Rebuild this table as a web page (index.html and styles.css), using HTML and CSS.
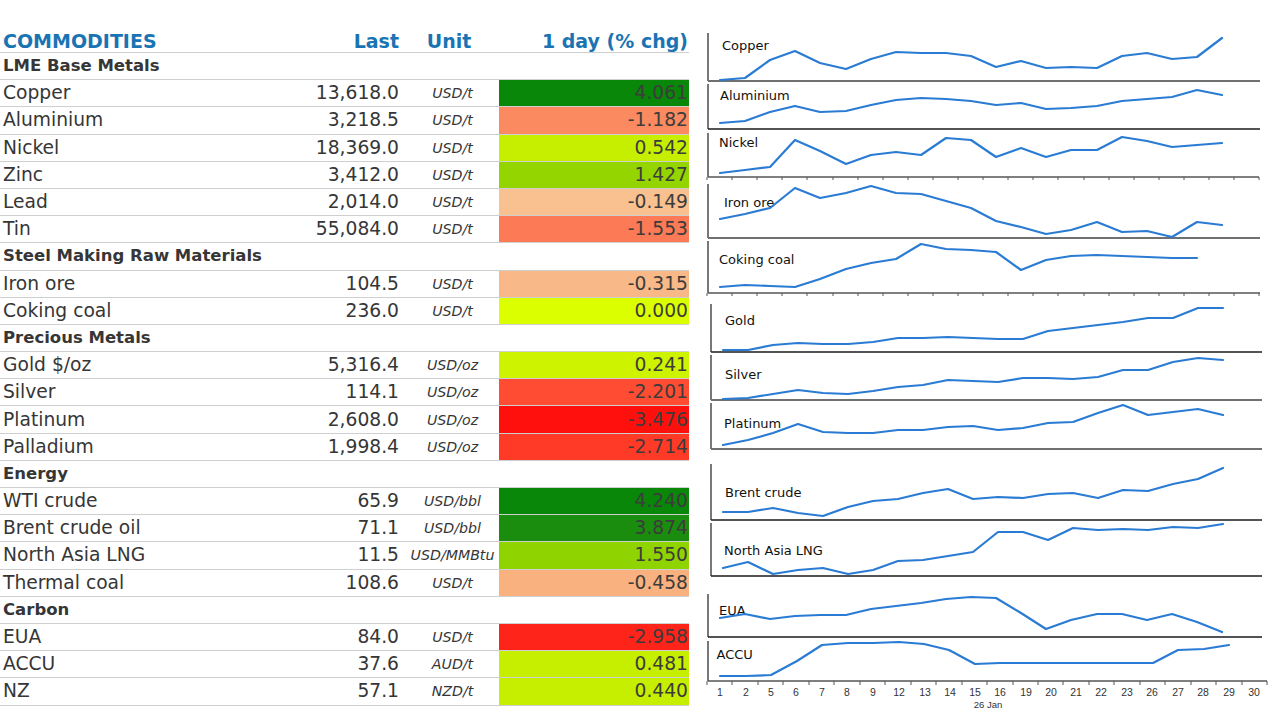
FILE: index.html
```html
<!DOCTYPE html>
<html lang="en">
<head>
<meta charset="utf-8">
<title>Commodities</title>
<link rel="stylesheet" href="styles.css">
</head>
<body>
<div class="page">
  <table class="board">
    <colgroup>
      <col class="c-name"><col class="c-last"><col class="c-unit"><col class="c-chg">
    </colgroup>
    <thead>
      <tr class="head">
        <th class="name">COMMODITIES</th>
        <th class="last">Last</th>
        <th class="unit-h">Unit</th>
        <th class="chg">1 day (% chg)</th>
      </tr>
    </thead>
    <tbody>
      <tr class="sec"><td colspan="4">LME Base Metals</td></tr>
      <tr><td class="name">Copper</td><td class="last">13,618.0</td><td class="unit">USD/t</td><td class="chg g1">4.061</td></tr>
      <tr><td class="name">Aluminium</td><td class="last">3,218.5</td><td class="unit">USD/t</td><td class="chg r2">-1.182</td></tr>
      <tr><td class="name">Nickel</td><td class="last">18,369.0</td><td class="unit">USD/t</td><td class="chg l1">0.542</td></tr>
      <tr><td class="name">Zinc</td><td class="last">3,412.0</td><td class="unit">USD/t</td><td class="chg l3">1.427</td></tr>
      <tr><td class="name">Lead</td><td class="last">2,014.0</td><td class="unit">USD/t</td><td class="chg p1">-0.149</td></tr>
      <tr><td class="name">Tin</td><td class="last">55,084.0</td><td class="unit">USD/t</td><td class="chg r3">-1.553</td></tr>
      <tr class="sec"><td colspan="4">Steel Making Raw Materials</td></tr>
      <tr><td class="name">Iron ore</td><td class="last">104.5</td><td class="unit">USD/t</td><td class="chg p2">-0.315</td></tr>
      <tr><td class="name">Coking coal</td><td class="last">236.0</td><td class="unit">USD/t</td><td class="chg y0">0.000</td></tr>
      <tr class="sec"><td colspan="4">Precious Metals</td></tr>
      <tr><td class="name">Gold $/oz</td><td class="last">5,316.4</td><td class="unit">USD/oz</td><td class="chg l2">0.241</td></tr>
      <tr><td class="name">Silver</td><td class="last">114.1</td><td class="unit">USD/oz</td><td class="chg r4">-2.201</td></tr>
      <tr><td class="name">Platinum</td><td class="last">2,608.0</td><td class="unit">USD/oz</td><td class="chg r6">-3.476</td></tr>
      <tr><td class="name">Palladium</td><td class="last">1,998.4</td><td class="unit">USD/oz</td><td class="chg r5">-2.714</td></tr>
      <tr class="sec"><td colspan="4">Energy</td></tr>
      <tr><td class="name">WTI crude</td><td class="last">65.9</td><td class="unit">USD/bbl</td><td class="chg g1">4.240</td></tr>
      <tr><td class="name">Brent crude oil</td><td class="last">71.1</td><td class="unit">USD/bbl</td><td class="chg g2">3.874</td></tr>
      <tr><td class="name">North Asia LNG</td><td class="last">11.5</td><td class="unit">USD/MMBtu</td><td class="chg l4">1.550</td></tr>
      <tr><td class="name">Thermal coal</td><td class="last">108.6</td><td class="unit">USD/t</td><td class="chg p3">-0.458</td></tr>
      <tr class="sec"><td colspan="4">Carbon</td></tr>
      <tr><td class="name">EUA</td><td class="last">84.0</td><td class="unit">USD/t</td><td class="chg r5b">-2.958</td></tr>
      <tr><td class="name">ACCU</td><td class="last">37.6</td><td class="unit">AUD/t</td><td class="chg l1">0.481</td></tr>
      <tr><td class="name">NZ</td><td class="last">57.1</td><td class="unit">NZD/t</td><td class="chg l1">0.440</td></tr>
    </tbody>
  </table>

  <svg class="charts" width="580" height="720" viewBox="700 0 580 720" xmlns="http://www.w3.org/2000/svg">
    <!-- Copper -->
    <line class="ax" x1="708" y1="33" x2="708" y2="81"/>
    <line class="base gray" x1="708" y1="81" x2="1260" y2="81"/>
    <text class="lbl" x="722" y="50">Copper</text>
    <polyline class="ln" points="720,80 745,78 770,60 795,51 820,63 846,69 871,59 896,52 921,53 946,53 971,56 996,67 1021,61 1046,68 1071,67 1097,68 1122,56 1147,53 1172,59 1197,57 1222,38"/>

    <!-- Aluminium -->
    <line class="ax" x1="708" y1="84" x2="708" y2="129"/>
    <line class="base dark" x1="708" y1="129" x2="1260" y2="129"/>
    <text class="lbl" x="720" y="100">Aluminium</text>
    <polyline class="ln" points="720,123 745,121 770,112 795,106 820,112 846,111 871,105 896,100 921,98 946,99 971,101 996,105 1021,103 1046,109 1071,108 1097,106 1122,101 1147,99 1172,97 1197,90 1222,95"/>

    <!-- Nickel -->
    <line class="ax" x1="708" y1="133" x2="708" y2="177"/>
    <line class="base mid" x1="708" y1="177" x2="1259" y2="177"/>
    <path class="tick" d="M707 177v3M732 177v3M757 177v3M782 177v3M807 177v3M833 177v3M858 177v3M883 177v3M908 177v3M933 177v3M958 177v3M983 177v3M1008 177v3M1033 177v3M1058 177v3M1084 177v3M1109 177v3M1134 177v3M1159 177v3M1184 177v3M1209 177v3M1234 177v3M1259 177v3"/>
    <text class="lbl" x="719" y="146.5">Nickel</text>
    <polyline class="ln" points="720,173 745,170 770,167 795,140 820,151 846,164 871,155 896,152 921,155 946,138 971,140 996,157 1021,148 1046,157 1071,150 1097,150 1122,137 1147,141 1172,147 1197,145 1222,143"/>

    <!-- Iron ore -->
    <line class="ax" x1="708" y1="184" x2="708" y2="238"/>
    <line class="base gray" x1="708" y1="238" x2="1260" y2="238"/>
    <text class="lbl" x="724" y="206.5">Iron ore</text>
    <polyline class="ln" points="720,219 745,214 770,208 795,188 820,198 846,193 871,186 896,193 921,194 946,201 971,208 996,221 1021,227 1046,234 1071,230 1097,222 1122,232 1147,231 1172,237 1197,222 1222,225"/>

    <!-- Coking coal -->
    <line class="ax" x1="708" y1="241" x2="708" y2="293"/>
    <line class="base mid" x1="708" y1="293" x2="1260" y2="293"/>
    <path class="tick" d="M707 293v3M732 293v3M757 293v3M782 293v3M807 293v3M833 293v3M858 293v3M883 293v3M908 293v3M933 293v3M958 293v3M983 293v3M1008 293v3M1033 293v3M1058 293v3M1084 293v3M1109 293v3M1134 293v3M1159 293v3M1184 293v3M1209 293v3M1234 293v3M1259 293v3"/>
    <text class="lbl" x="719" y="264">Coking coal</text>
    <polyline class="ln" points="720,287 745,285 770,286 795,287 820,279 846,269 871,263 896,259 921,244 946,249 971,250 996,252 1021,270 1046,260 1071,256 1097,255 1122,256 1147,257 1172,258 1197,258"/>

    <!-- Gold -->
    <line class="ax" x1="711" y1="304" x2="711" y2="352"/>
    <line class="base dark" x1="711" y1="352" x2="1262" y2="352"/>
    <text class="lbl" x="725" y="324.5">Gold</text>
    <polyline class="ln" points="723,350 748,350 773,345 798,343 823,344 848,344 873,342 898,338 923,338 948,337 973,338 998,339 1023,339 1048,331 1073,328 1098,325 1123,322 1148,318 1173,318 1198,308 1223,308"/>

    <!-- Silver -->
    <line class="ax" x1="711" y1="355" x2="711" y2="400"/>
    <line class="base gray" x1="711" y1="400" x2="1262" y2="400"/>
    <text class="lbl" x="725" y="379">Silver</text>
    <polyline class="ln" points="723,399 748,398 773,394 798,390 823,393 848,394 873,391 898,387 923,385 948,380 973,381 998,382 1023,378 1048,378 1073,379 1098,377 1123,370 1148,370 1173,362 1198,358 1223,360"/>

    <!-- Platinum -->
    <line class="ax" x1="711" y1="403" x2="711" y2="449"/>
    <line class="base gray" x1="711" y1="449" x2="1262" y2="449"/>
    <text class="lbl" x="724" y="427.5">Platinum</text>
    <polyline class="ln" points="723,445 748,440 773,433 798,424 823,432 848,433 873,433 898,430 923,430 948,427 973,426 998,430 1023,428 1048,423 1073,422 1098,413 1123,405 1148,415 1173,412 1198,409 1223,415"/>

    <!-- Brent crude -->
    <line class="ax" x1="711" y1="464" x2="711" y2="520"/>
    <line class="base dark" x1="711" y1="520" x2="1262" y2="520"/>
    <text class="lbl" x="725" y="497">Brent crude</text>
    <polyline class="ln" points="723,512 748,512 773,508 798,513 823,516 848,507 873,501 898,499 923,493 948,489 973,499 998,497 1023,498 1048,494 1073,493 1098,498 1123,490 1148,491 1173,484 1198,479 1223,468"/>

    <!-- North Asia LNG -->
    <line class="ax" x1="711" y1="523" x2="711" y2="576"/>
    <line class="base dark" x1="711" y1="576" x2="1262" y2="576"/>
    <text class="lbl" x="724" y="555">North Asia LNG</text>
    <polyline class="ln" points="723,568 748,562 773,574 798,570 823,568 848,574 873,570 898,561 923,560 948,556 973,552 998,532 1023,532 1048,540 1073,528 1098,530 1123,529 1148,530 1173,527 1198,528 1223,524"/>

    <!-- EUA -->
    <line class="ax" x1="708" y1="594" x2="708" y2="637"/>
    <line class="base dark" x1="708" y1="637" x2="1262" y2="637"/>
    <text class="lbl" x="719" y="615">EUA</text>
    <polyline class="ln" points="720,618 745,614 770,619 795,616 820,615 846,615 871,609 896,606 921,603 946,599 971,597 996,598 1021,613 1046,629 1071,620 1097,614 1122,614 1147,620 1172,614 1197,622 1222,632"/>

    <!-- ACCU -->
    <line class="ax" x1="708" y1="641" x2="708" y2="681"/>
    <line class="base mid" x1="708" y1="681" x2="1267" y2="681"/>
    <path class="tick" d="M707 681v4M732 681v4M758 681v4M783 681v4M809 681v4M834 681v4M860 681v4M885 681v4M911 681v4M936 681v4M962 681v4M987 681v4M1013 681v4M1038 681v4M1063 681v4M1089 681v4M1114 681v4M1140 681v4M1165 681v4M1191 681v4M1216 681v4M1242 681v4M1267 681v4"/>
    <text class="lbl" x="716.5" y="659">ACCU</text>
    <polyline class="ln" points="720,676 746,676 771,675 797,661 822,645 848,643 873,643 899,642 924,644 949,650 975,664 1000,663 1026,663 1051,663 1077,663 1102,663 1128,663 1153,663 1178,650 1204,649 1229,645"/>

    <!-- X axis labels -->
    <g class="xl">
      <text x="720" y="696">1</text>
      <text x="746" y="696">2</text>
      <text x="771" y="696">5</text>
      <text x="796" y="696">6</text>
      <text x="822" y="696">7</text>
      <text x="847" y="696">8</text>
      <text x="873" y="696">9</text>
      <text x="899" y="696">12</text>
      <text x="925" y="696">13</text>
      <text x="950" y="696">14</text>
      <text x="975" y="696">15</text>
      <text x="1000" y="696">16</text>
      <text x="1026" y="696">19</text>
      <text x="1051" y="696">20</text>
      <text x="1076" y="696">21</text>
      <text x="1101" y="696">22</text>
      <text x="1127" y="696">23</text>
      <text x="1152" y="696">26</text>
      <text x="1178" y="696">27</text>
      <text x="1203" y="696">28</text>
      <text x="1229" y="696">29</text>
      <text x="1254" y="696">30</text>
      <text class="mo" x="988" y="708">26 Jan</text>
    </g>
  </svg>
</div>
</body>
</html>
```

FILE: styles.css
```css
html, body {
  margin: 0;
  padding: 0;
  background: #ffffff;
}

.page {
  display: flex;
  align-items: flex-start;
  gap: 11px;
  width: 1280px;
  height: 720px;
  overflow: hidden;
}

.board {
  width: 689px;
  margin-top: 29px;
  table-layout: fixed;
  border-collapse: separate;
  border-spacing: 0;
  font-family: Verdana, "DejaVu Sans", sans-serif;
  color: #363636;
  flex: none;
}

.c-name { width: 300px; }
.c-last { width: 100px; }
.c-unit { width: 99px; }
.c-chg { width: 190px; }

.board th,
.board td {
  padding: 0;
  border-bottom: 1px solid #cfcfcf;
  white-space: nowrap;
  vertical-align: middle;
  overflow: hidden;
}

.head {
  height: 24px;
}

.head th {
  font-size: 19px;
  font-weight: bold;
  color: #1a74b3;
  line-height: 22px;
}

.board tbody tr {
  height: 27.2px;
}

.board td {
  font-size: 18.7px;
  line-height: 22px;
}

.name {
  text-align: left;
  padding-left: 3px !important;
}

.last {
  text-align: right;
  padding-right: 1px !important;
}

.unit-h {
  text-align: center;
  padding-right: 1px !important;
}

.unit {
  text-align: center;
  padding-left: 6px !important;
  font-style: italic;
  font-size: 14.2px !important;
}

.chg {
  text-align: right;
  padding-right: 1px !important;
}

td.chg {
  color: #3c3c3c;
}

.sec td {
  font-size: 16.5px;
  font-weight: bold;
  padding-left: 3px;
}

/* change colour scale */
.g1 { background: #088708; }
.g2 { background: #1a8c0e; }
.l1 { background: #c6ef00; }
.l2 { background: #cdf300; }
.l3 { background: #94d500; }
.l4 { background: #8fd300; }
.y0 { background: #dcff00; }
.p1 { background: #f9c18f; }
.p2 { background: #f9b887; }
.p3 { background: #f9b27f; }
.r2 { background: #fb8a60; }
.r3 { background: #fc7a55; }
.r4 { background: #ff4c33; }
.r5 { background: #ff3a26; }
.r5b { background: #ff2419; }
.r6 { background: #ff100c; }

.charts {
  display: block;
  flex: none;
}

.ax {
  stroke: #1e1e1e;
  stroke-width: 1.2;
}

.base {
  stroke-width: 1.3;
}

.base.gray {
  stroke: #707070;
  stroke-width: 2.2;
}

.base.dark {
  stroke: #1a1a1a;
  stroke-width: 1.3;
}

.base.mid {
  stroke: #555555;
  stroke-width: 1.6;
}

.tick {
  stroke: #555555;
  stroke-width: 1;
  fill: none;
}

.ln {
  fill: none;
  stroke: #2a7bd3;
  stroke-width: 2.2;
  stroke-linejoin: round;
  stroke-linecap: round;
}

.lbl {
  font-family: "DejaVu Sans", Verdana, sans-serif;
  font-size: 13px;
  fill: #111111;
}

.xl text {
  font-family: "Liberation Sans", Arial, sans-serif;
  font-size: 10.5px;
  fill: #333333;
  text-anchor: middle;
}

.xl .mo {
  font-size: 9.5px;
}
```
